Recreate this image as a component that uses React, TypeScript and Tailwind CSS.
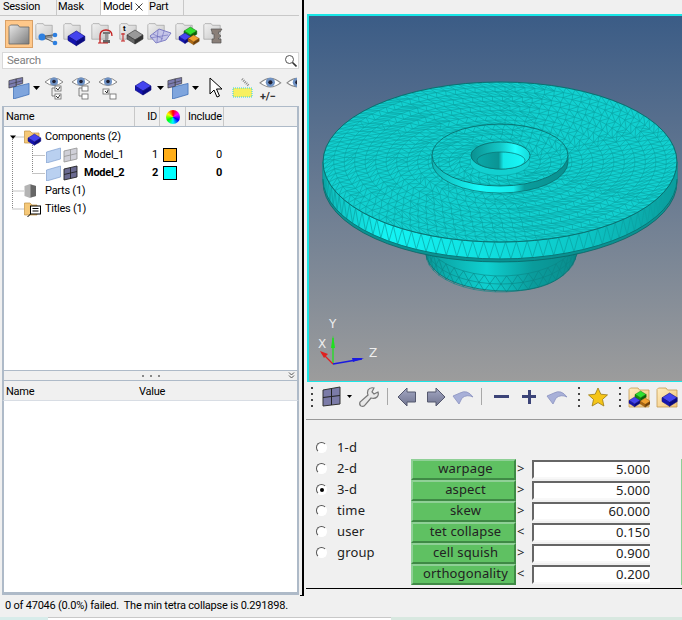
import React from "react";

const F = 'Roboto, "Liberation Sans", Arial, sans-serif';

function Folder({ x = 0, y = 0, tone = "gray", s = 1 }: { x?: number; y?: number; tone?: string; s?: number }) {
  const c = tone === "gray" ? ["#f2f2f2", "#c6c6c6", "#9a9a9a"] : tone === "dark" ? ["#e8e8e8", "#7c7c7c", "#666"] : ["#ffedc0", "#f2c478", "#c49a50"];
  const id = "f" + tone;
  return (
    <g transform={`translate(${x} ${y}) scale(${s})`}>
      <defs>
        <linearGradient id={id} x1="0" y1="0" x2="1" y2="1">
          <stop offset="0" stopColor={c[0]} />
          <stop offset="1" stopColor={c[1]} />
        </linearGradient>
      </defs>
      <path d="M1 3.5 L2.5 2 H10 L11.5 4 H21 V21 H1 Z" fill={`url(#${id})`} stroke={c[2]} strokeWidth="0.8" />
    </g>
  );
}

function Box3D({ x, y, s = 1, top = "#4a5cff", side = "#1414b0", dark = "#0a0a80" }: { x: number; y: number; s?: number; top?: string; side?: string; dark?: string }) {
  return (
    <g transform={`translate(${x} ${y}) scale(${s})`}>
      <path d="M0 5 L8 0 L16 5 L8 10 Z" fill={top} stroke={dark} strokeWidth="0.6" />
      <path d="M0 5 V9 L8 14 V10 Z" fill={side} stroke={dark} strokeWidth="0.6" />
      <path d="M16 5 V9 L8 14 V10 Z" fill={dark} stroke={dark} strokeWidth="0.6" />
    </g>
  );
}

function Icon({ children, w = 26, h = 26 }: { children?: React.ReactNode; w?: number; h?: number }) {
  return (
    <svg width={w} height={h} viewBox={`0 0 ${w} ${h}`} className="block shrink-0">
      {children}
    </svg>
  );
}

function TopIcons() {
  return (
    <div className="flex h-[36px] items-center pl-[3px]">
      <div className="flex h-[28px] w-[28px] items-center justify-center border border-[#d9a066] bg-[#ffc88a]">
        <Icon w={22} h={22}>
          <Folder x={0} y={0} tone="dark" />
        </Icon>
      </div>
      {[
        <g key="a"><circle cx="9" cy="16" r="3.5" fill="#2d7fe0" /><circle cx="22" cy="14" r="2.3" fill="#2d7fe0" /><circle cx="22" cy="22" r="2.3" fill="#2d7fe0" /><path d="M12 16 H19 M12 15 L20 14 M12 17 L20 21" stroke="#333" strokeWidth="0.8" /></g>,
        <Box3D key="b" x={7} y={10} s={1.05} top="#4444ee" />,
        <g key="c"><path d="M11 22 V15 Q11 9 17 9 Q23 9 23 15" fill="none" stroke="#c42020" strokeWidth="1.3" /><rect x="14" y="11" width="7" height="2" fill="#777" /><rect x="16" y="13" width="3" height="6" fill="#999" /><rect x="14" y="19" width="7" height="3" fill="#666" /><path d="M9 22 H19" stroke="#c42020" /></g>,
        <g key="d"><text x="6" y="10" fontSize="8" fontWeight="bold" fill="#000" fontFamily={F}>t</text><path d="M6 12 V20" stroke="#c42020" strokeWidth="1" /><path d="M4 13 H8 M4 20 H8" stroke="#c42020" /><Box3D x={10} y={9} top="#999" side="#666" dark="#333" /></g>,
        <g key="e"><path d="M5 15 L14 8 L26 12 L21 19 L11 22 Z" fill="#c5c5e8" stroke="#6a6abb" strokeWidth="0.8" /><path d="M8 13 L18 18 M13 9 L12 21 M19 10 L16 20 M5 17 L23 14" stroke="#6a6abb" strokeWidth="0.6" /></g>,
        <g key="f"><Box3D x={11} y={6} s={0.8} top="#30e030" side="#109010" dark="#0a600a" /><Box3D x={6} y={12} s={0.75} top="#4444ee" /><Box3D x={15} y={14} s={0.7} top="#f0a030" side="#b06a10" dark="#704008" /></g>,
        <g key="g"><path d="M10 8 H21 L19 11 H17.5 V13 L20 15 L17.5 17 V18 H20 V22 H11 V18 H13 V13 H11 V11 Z" fill="#8a7f78" stroke="#555" strokeWidth="0.7" /></g>,
      ].map((c, i) => (
        <div key={i} className="flex h-[28px] w-[28px] items-center justify-center">
          <Icon w={28} h={26}>
            <Folder x={2} y={1} s={0.82} />
            {c}
          </Icon>
        </div>
      ))}
    </div>
  );
}

function Eye({ x = 0, y = 0, s = 1 }: { x?: number; y?: number; s?: number }) {
  return (
    <g transform={`translate(${x} ${y}) scale(${s})`}>
      <path d="M0 6 Q9 -2 18 6 Q9 13 0 6 Z" fill="#fff" stroke="#888" strokeWidth="1" />
      <circle cx="9" cy="5.5" r="4" fill="#6f92c4" />
      <circle cx="9" cy="5.5" r="1.8" fill="#223" />
    </g>
  );
}

function Caret() {
  return (
    <svg width="7" height="4" viewBox="0 0 7 4" className="block shrink-0">
      <path d="M0 0 H7 L3.5 4 Z" fill="#000" />
    </svg>
  );
}

function Flag() {
  return (
    <svg width={22} height={22} viewBox="0 0 24 24" className="block shrink-0">
      <path d="M6 11 L23 7 V19 L6 24 Z" fill="#7fa5dd" stroke="#2b5fae" strokeWidth="0.7" />
      <path d="M1 4 L9 2 V10 L1 12 Z" fill="#7c7cb0" stroke="#333" strokeWidth="0.7" />
      <path d="M9 2 L16 0.5 V7 L9 9 Z" fill="#7c7cb0" stroke="#333" strokeWidth="0.7" />
      <path d="M1 8 L16 4" stroke="#333" strokeWidth="0.6" />
    </svg>
  );
}

function SmallTreeBoxes({ v }: { v: number }) {
  return (
    <g stroke="#666" fill="#fff" strokeWidth="0.8">
      {v === 2 ? (
        <>
          <rect x="9" y="14" width="6" height="5" />
          <rect x="16" y="19" width="6" height="5" />
          <path d="M11 16 L13 18 L14 15" fill="none" stroke="#000" />
        </>
      ) : (
        <>
          <rect x="15" y="11" width="6" height="5" />
          <rect x="15" y="19" width="6" height="5" />
          <path d="M12 13 V21 M12 13 H15 M12 21 H15" fill="none" />
          {v === 0 && <path d="M16 13 L18 15 L20 12 M16 21 L18 23 L20 20" fill="none" stroke="#000" />}
        </>
      )}
    </g>
  );
}

function SecondToolbar() {
  return (
    <div className="flex h-[37px] items-center overflow-hidden pl-[6px]">
      <Flag />
      <div className="ml-[3px]"><Caret /></div>
      <Icon w={27} h={26}><Eye x={5} y={1} /><SmallTreeBoxes v={0} /></Icon>
      <Icon w={27} h={26}><Eye x={5} y={1} /><SmallTreeBoxes v={1} /></Icon>
      <Icon w={27} h={26}><Eye x={5} y={1} /><SmallTreeBoxes v={2} /></Icon>
      <div className="ml-[14px]">
        <Icon w={20} h={20}><Box3D x={0} y={3} top="#4444ee" /></Icon>
      </div>
      <div className="ml-[2px]"><Caret /></div>
      <div className="ml-[3px]"><Flag /></div>
      <div className="ml-[3px]"><Caret /></div>
      <div className="ml-[10px]">
        <svg width="14" height="22" viewBox="0 0 14 22" className="block"><path d="M1 1 V17 L5 13 L8 20 L10.5 19 L7.5 12 L13 12 Z" fill="#fff" stroke="#000" strokeWidth="1" /></svg>
      </div>
      <div className="ml-[9px]">
        <svg width="22" height="22" viewBox="0 0 22 22" className="block"><rect x="1" y="11" width="19" height="9" fill="#f8f060" stroke="#30d0e0" strokeDasharray="1 1" /><path d="M10 2 L17 9" stroke="#888" strokeWidth="2.5" strokeDasharray="1 1" /></svg>
      </div>
      <div className="ml-[4px]">
        <Icon w={24} h={28}><Eye x={2} y={2} s={1.15} /><text x="2" y="26" fontSize="11" fontWeight="bold" fill="#333" fontFamily={F}>+/−</text></Icon>
      </div>
      <div className="ml-[1px]">
        <Icon w={14} h={28}><Eye x={4} y={2} s={1.15} /></Icon>
      </div>
    </div>
  );
}

function FlagMesh({ dark }: { dark: boolean }) {
  return (
    <svg width="34" height="16" viewBox="0 0 34 16" className="block shrink-0">
      <path d="M0.5 5 L14.5 1 V12 L0.5 16 Z" fill="#b9d0f0" stroke="#7f9fd0" strokeWidth="0.7" />
      <path d="M18 4 L31 1 V12 L18 15 Z" fill={dark ? "#6a6a90" : "#d0d0d8"} stroke={dark ? "#222" : "#999"} strokeWidth="0.9" />
      <path d="M18 9.5 L31 6.5 M24.5 2.5 V13.5" stroke={dark ? "#222" : "#999"} strokeWidth="0.9" />
    </svg>
  );
}

function TreeRow({ pad, icon, text, bold, id, color, include, gap = 3 }: { pad: string; icon: React.ReactNode; text: string; bold?: boolean; id?: string; color?: string; include?: string; gap?: number }) {
  return (
    <div className={`relative flex h-[18px] items-center ${pad} ${bold ? "font-bold" : ""}`}>
      {icon}
      <span className="pt-[1px]" style={{ marginLeft: gap }}>{text}</span>
      {id && <span className="absolute left-[145px] w-[9px] pt-[1px] text-right">{id}</span>}
      {color && <span className="absolute left-[159px] top-[2px] h-[14px] w-[14px] border border-black" style={{ background: color }} />}
      {include && <span className="absolute left-[212px] pt-[1px]">{include}</span>}
    </div>
  );
}

function Tree() {
  return (
    <div className="relative min-h-0 flex-1 border-x-2 border-[#aebac8] bg-white text-[11px] text-[#000]">
      <svg width="60" height="90" viewBox="0 0 60 90" className="absolute left-0 top-0">
        <g stroke="#888" strokeDasharray="1 1" fill="none">
          <path d="M8.5 10 V82 M8.5 10 H20 M8.5 64 H20 M8.5 82 H20 M28.5 18 V46 M28.5 28.5 H41 M28.5 46.5 H41" />
        </g>
        <path d="M6 8.5 H12 L9 12 Z" fill="#000" />
      </svg>
      <div className="relative pt-[1px]">
        <TreeRow
          pad="pl-[20px]"
          icon={
            <Icon w={18} h={18}>
              <path d="M0.5 3 H6 L8 5 H15 V15 H0.5 Z" fill="#f5c878" stroke="#c09040" strokeWidth="0.7" />
              <Box3D x={4} y={6} s={0.8} top="#4444ee" />
            </Icon>
          }
          text="Components (2)"
        />
        <TreeRow pad="pl-[42px]" icon={<FlagMesh dark={false} />} gap={4} text="Model_1" id="1" color="#ffae19" include="0" />
        <TreeRow pad="pl-[42px]" icon={<FlagMesh dark />} gap={4} text="Model_2" bold id="2" color="#00ffff" include="0" />
        <TreeRow
          pad="pl-[20px]"
          icon={
            <Icon w={18} h={18}>
              <path d="M0.5 4 L6 2 L12 4 V14 L6 16 L0.5 14 Z" fill="#b4b4b4" />
              <path d="M6.5 2.5 L12 4 V14 L6.5 15.5 Z" fill="#666" />
            </Icon>
          }
          text="Parts (1)"
        />
        <TreeRow
          pad="pl-[20px]"
          icon={
            <Icon w={18} h={18}>
              <path d="M0.5 3 H6 L8 5 H13 V15 H0.5 Z" fill="#f5c878" stroke="#c09040" strokeWidth="0.7" />
              <rect x="6.5" y="6" width="10" height="8" fill="#fff" stroke="#000" />
              <path d="M8.5 8.5 H14.5 M8.5 11 H14.5 M6.5 14 L3.5 17" stroke="#000" />
            </Icon>
          }
          text="Titles (1)"
        />
      </div>
    </div>
  );
}

function LeftPanel() {
  return (
    <div className="flex h-[595px] w-[302px] shrink-0 flex-col pl-[2px] pr-[3px] text-[11px] tracking-[-0.25px] text-black" style={{ fontFamily: F }}>
      <div className="-ml-[2px] flex h-[16px] items-end border-b border-[#c8c8c8] pl-[3px]">
        <div className="flex h-[15px] w-[54px] items-center border-r border-[#c8c8c8]">Session</div>
        <div className="flex h-[15px] w-[44px] items-center border-r border-[#c8c8c8] pl-[1px]">Mask</div>
        <div className="flex h-[16px] w-[47px] items-center gap-[3px] bg-white pl-[2px]">
          Model
          <svg width="8" height="8" viewBox="0 0 8 8" className="shrink-0"><path d="M0.5 0.5 L7.5 7.5 M7.5 0.5 L0.5 7.5" stroke="#444" strokeWidth="1" /></svg>
        </div>
        <div className="flex h-[15px] w-[36px] items-center border-r border-[#c8c8c8] pl-[1px]">Part</div>
      </div>
      <TopIcons />
      <div className="flex h-[17px] items-center justify-between border border-[#d8d8d8] bg-white pl-[4px] pr-[1px] text-[11.5px] text-[#808080]">
        <span>Search</span>
        <svg width="13" height="13" viewBox="0 0 13 13"><circle cx="5.5" cy="5.5" r="4" fill="none" stroke="#555" strokeWidth="1" /><path d="M8.5 8.5 L12.5 12.5" stroke="#333" strokeWidth="1.6" /></svg>
      </div>
      <SecondToolbar />
      <div className="flex h-[21px] shrink-0 border-x-2 border-y border-[#aebac8] bg-[#f0f0f0]">
        <div className="flex w-[131px] items-center border-r border-[#c8c8c8] pl-[2px] pt-[1px]">Name</div>
        <div className="flex w-[25px] items-center justify-end border-r border-[#c8c8c8] pr-[2px] pt-[1px]">ID</div>
        <div className="flex w-[26px] items-center justify-center border-r border-[#c8c8c8]">
          <div className="h-[14px] w-[14px] rounded-full" style={{ background: "conic-gradient(#ff0000,#ff00ff,#0000ff,#00ffff,#00ff00,#ffff00,#ff0000)" }} />
        </div>
        <div className="flex w-[38px] items-center border-r border-[#c8c8c8] pl-[2px] pt-[1px]">Include</div>
      </div>
      <Tree />
      <div className="relative flex h-[11px] shrink-0 items-center justify-center gap-[6px] border-x-2 border-y border-[#aebac8] bg-[#f0f0f0]">
        <span className="h-[2px] w-[2px] bg-[#888]" />
        <span className="h-[2px] w-[2px] bg-[#888]" />
        <span className="h-[2px] w-[2px] bg-[#888]" />
        <svg width="7" height="7" viewBox="0 0 7 7" className="absolute right-[2px] top-[1px]"><path d="M1 0.5 L3.5 3 L6 0.5 M1 3.5 L3.5 6 L6 3.5" stroke="#555" fill="none" strokeWidth="1" /></svg>
      </div>
      <div className="flex h-[20px] shrink-0 items-center border-x-2 border-b border-[#aebac8] border-b-[#d8dde4] bg-[#f0f0f0] pl-[2px] pt-[4px]">
        <span className="w-[133px]">Name</span>
        <span>Value</span>
      </div>
      <div className="h-[194px] shrink-0 border-x-2 border-b-[3px] border-[#aebac8] bg-white" />
    </div>
  );
}

function buildMesh() {
  const cx = 500, cy = 162, rx = 177, ry = 80;
  const rings: [number, number][][] = [];
  const rs: number[] = [];
  for (let r = 0.17; r <= 1.0001; r += 0.0592) rs.push(Math.min(r, 1));
  rs.forEach((r, k) => {
    const n = Math.round((2 * Math.PI * r * 177) / 10);
    const pts: [number, number][] = [];
    for (let i = 0; i < n; i++) {
      const a = ((i + (k % 2) * 0.5) / n) * 2 * Math.PI;
      pts.push([cx + rx * r * Math.cos(a), cy + ry * r * Math.sin(a)]);
    }
    rings.push(pts);
  });
  let d = "";
  rings.forEach((pts, k) => {
    pts.forEach((p, i) => {
      const q = pts[(i + 1) % pts.length];
      d += `M${p[0].toFixed(1)} ${p[1].toFixed(1)}L${q[0].toFixed(1)} ${q[1].toFixed(1)}`;
      if (k > 0) {
        const prev = rings[k - 1];
        const t = Math.round((i / pts.length) * prev.length) % prev.length;
        const u = (t + 1) % prev.length;
        d += `M${p[0].toFixed(1)} ${p[1].toFixed(1)}L${prev[t][0].toFixed(1)} ${prev[t][1].toFixed(1)}`;
        d += `M${p[0].toFixed(1)} ${p[1].toFixed(1)}L${prev[u][0].toFixed(1)} ${prev[u][1].toFixed(1)}`;
      }
    });
  });
  return d;
}

function bandMesh(cx: number, cy: number, rx: number, ry: number, h: number, rows: number, step: number) {
  const a0 = 0, a1 = Math.PI;
  let d = "";
  for (let k = 0; k <= rows; k++) {
    const y0 = (k / rows) * h;
    const n = Math.round(((a1 - a0) * rx) / step);
    for (let i = 0; i <= n; i++) {
      const off = (k % 2) * 0.5;
      const a = a0 + ((i + off) / n) * (a1 - a0);
      const x = cx + rx * Math.cos(a), y = cy + ry * Math.sin(a) + y0;
      const b = a0 + ((i + 1 + off) / n) * (a1 - a0);
      if (b <= a1) d += `M${x.toFixed(1)} ${y.toFixed(1)}L${(cx + rx * Math.cos(b)).toFixed(1)} ${(cy + ry * Math.sin(b) + y0).toFixed(1)}`;
      if (k < rows) {
        const y1 = ((k + 1) / rows) * h;
        const o2 = ((k + 1) % 2) * 0.5;
        for (const j of [i, i + (off ? 1 : -1)]) {
          const c = a0 + ((j + o2) / n) * (a1 - a0);
          if (c >= a0 && c <= a1) d += `M${x.toFixed(1)} ${y.toFixed(1)}L${(cx + rx * Math.cos(c)).toFixed(1)} ${(cy + ry * Math.sin(c) + y1).toFixed(1)}`;
        }
      }
    }
  }
  return d;
}

function Model() {
  const top = React.useMemo(buildMesh, []);
  const band = React.useMemo(() => bandMesh(500, 162, 177, 80, 17, 1, 11), []);
  const boss = React.useMemo(() => bandMesh(501, 238, 75, 38, 16, 2, 11), []);
  return (
    <svg width="373" height="365" viewBox="309 16 373 365" className="block">
      <defs>
        <linearGradient id="band" x1="0" y1="0" x2="1" y2="0">
          <stop offset="0" stopColor="#0fb8b8" />
          <stop offset="0.18" stopColor="#14f4f4" />
          <stop offset="0.45" stopColor="#10e0e0" />
          <stop offset="0.75" stopColor="#0cc4c4" />
          <stop offset="1" stopColor="#0a9c9c" />
        </linearGradient>
        <linearGradient id="boss" x1="0" y1="0" x2="1" y2="0">
          <stop offset="0" stopColor="#0a9a9a" />
          <stop offset="0.4" stopColor="#0fd0d0" />
          <stop offset="0.7" stopColor="#0a9c9c" />
          <stop offset="1" stopColor="#0a8c8c" />
        </linearGradient>
        <linearGradient id="ring" x1="0" y1="0" x2="1" y2="0">
          <stop offset="0" stopColor="#0fb4b4" />
          <stop offset="0.35" stopColor="#16fafa" />
          <stop offset="0.6" stopColor="#16eaea" />
          <stop offset="0.68" stopColor="#0a9c9c" />
          <stop offset="1" stopColor="#0a9090" />
        </linearGradient>
        <linearGradient id="hole" x1="0" y1="0" x2="1" y2="0">
          <stop offset="0" stopColor="#0a9090" />
          <stop offset="0.5" stopColor="#14c8c8" />
          <stop offset="0.75" stopColor="#20ffff" />
          <stop offset="1" stopColor="#14d8d8" />
        </linearGradient>
        <linearGradient id="hole2" x1="0" y1="0" x2="1" y2="0">
          <stop offset="0" stopColor="#0aa8a8" />
          <stop offset="0.45" stopColor="#0a9494" />
          <stop offset="0.55" stopColor="#14e8e8" />
          <stop offset="1" stopColor="#18f8f8" />
        </linearGradient>
        <clipPath id="ringclip"><ellipse cx="500" cy="155" rx="68" ry="31" /></clipPath>
      </defs>
      <path d="M426 255 C432 280 470 291 507 291 C545 291 572 278 578 250 L578 240 H426 Z" fill="url(#boss)" />
      <path d={boss} stroke="#0a8484" strokeWidth="0.6" fill="none" />
      <path d="M426 255 C432 280 470 291 507 291 C545 291 572 278 578 250" fill="none" stroke="#0a7070" strokeWidth="0.8" />
      <path d="M323 162 V182 A177 80 0 0 0 677 182 V162 Z" fill="#0a9292" stroke="#0a6464" strokeWidth="0.8" />
      <path d="M323 162 V179 A177 80 0 0 0 677 179 V162 Z" fill="url(#band)" />
      <path d={band} stroke="#0aa0a0" strokeWidth="0.7" fill="none" />
      <path d="M323 179 A177 80 0 0 0 677 179" fill="none" stroke="#0a6a6a" strokeWidth="0.8" />
      <ellipse cx="500" cy="162" rx="177" ry="80" fill="#12d0d0" />
      <path d={top} stroke="#0ba2a2" strokeWidth="0.65" fill="none" />
      <ellipse cx="500" cy="162" rx="177" ry="80" fill="none" stroke="#0a6060" strokeWidth="0.8" />
      <path d="M432 155 V162 A68 31 0 0 0 568 162 V155 Z" fill="url(#ring)" stroke="#0a6a6a" strokeWidth="0.7" />
      <ellipse cx="500" cy="155" rx="68" ry="31" fill="#12d0d0" />
      <g clipPath="url(#ringclip)">
        <path d={top} stroke="#0ba2a2" strokeWidth="0.65" fill="none" />
      </g>
      <ellipse cx="500" cy="155" rx="68" ry="31" fill="none" stroke="#0a6464" strokeWidth="0.8" />
      <ellipse cx="500.5" cy="155.5" rx="29.5" ry="13.5" fill="url(#hole)" stroke="#0a6a6a" strokeWidth="0.8" />
      <ellipse cx="501" cy="160.5" rx="24" ry="8.5" fill="url(#hole2)" stroke="#0a7070" strokeWidth="0.7" />
    </svg>
  );
}

function Triad() {
  return (
    <svg width="72" height="60" viewBox="0 0 72 60" className="absolute bottom-[5px] left-[-2px]">
      <path d="M26 48 V22" stroke="#20e020" strokeWidth="1.3" />
      <path d="M24 32 L26 19 L28 32 Z" fill="#20e020" />
      <path d="M26 48 L15 37" stroke="#e02020" strokeWidth="1.3" />
      <path d="M13 35 L21 38 L17 42 Z" fill="#e02020" />
      <path d="M26 48 L55 43" stroke="#1a1ae0" strokeWidth="1.3" />
      <path d="M45 42 L57 42 L46 46 Z" fill="#1a1ae0" />
      <text x="22" y="12" fill="#eee" fontSize="12" fontFamily="DejaVu Sans">Y</text>
      <text x="11" y="32" fill="#eee" fontSize="12" fontFamily="DejaVu Sans">X</text>
      <text x="62" y="41" fill="#eee" fontSize="12" fontFamily="DejaVu Sans">Z</text>
    </svg>
  );
}

function Dots() {
  return (
    <div className="flex h-[20px] w-[3px] shrink-0 flex-col justify-between">
      <span className="h-[2px] w-[2px] bg-[#444]" />
      <span className="h-[2px] w-[2px] bg-[#444]" />
      <span className="h-[2px] w-[2px] bg-[#444]" />
      <span className="h-[2px] w-[2px] bg-[#444]" />
    </div>
  );
}

const Sep = () => <div className="h-[17px] w-[1px] shrink-0 bg-[#a8a8a8]" />;

function Arrow({ flip }: { flip?: boolean }) {
  return (
    <svg width="20" height="22" viewBox="0 0 20 22" className="block shrink-0" style={flip ? { transform: "scaleX(-1)" } : undefined}>
      <defs>
        <linearGradient id="arr" x1="0" y1="0" x2="0" y2="1">
          <stop offset="0" stopColor="#a4a8c4" />
          <stop offset="1" stopColor="#70748f" />
        </linearGradient>
      </defs>
      <path d="M1 11 L10 2 V6 H18.5 V16 H10 V20 Z" fill="url(#arr)" stroke="#55586e" strokeWidth="1" />
    </svg>
  );
}

function Curl() {
  return (
    <svg width="22" height="18" viewBox="0 0 22 18" className="block shrink-0">
      <path d="M1 8 L8 5 Q15 1 21 9 Q15 6 10 10 L7 16 Z" fill="#a8b0d8" stroke="#8a92c0" strokeWidth="0.8" />
    </svg>
  );
}

function ViewToolbar() {
  return (
    <div className="mt-[1px] flex h-[27px] shrink-0 items-center bg-[#f0f0f0] pl-[5px]">
      <Dots />
      <div className="ml-[8px]">
        <svg width="20" height="21" viewBox="0 0 20 21" className="block">
          <path d="M1 4 L18 1 V18 L1 20 Z" fill="#7b7ba8" stroke="#333" strokeWidth="1" />
          <path d="M1 11.5 L18 9.5 M9.5 2.5 V19" stroke="#222" strokeWidth="1" />
        </svg>
      </div>
      <div className="ml-[5px]">
        <svg width="5" height="3" viewBox="0 0 5 3" className="block"><path d="M0 0 H5 L2.5 3 Z" fill="#000" /></svg>
      </div>
      <div className="ml-[6px]">
        <svg width="22" height="22" viewBox="0 0 22 22" className="block">
          <path d="M20 6 L16 8 L14 6 L16 2 Q12 1 10 4 Q9 7 10 9 L2 16 Q1 19 3 20 Q6 21 7 19 L13 12 Q17 13 19 11 Q21 9 20 6 Z" fill="#e8e8e8" stroke="#777" strokeWidth="1.2" />
        </svg>
      </div>
      <div className="ml-[7px]"><Sep /></div>
      <div className="ml-[9px]"><Arrow /></div>
      <div className="ml-[9px]"><Arrow flip /></div>
      <div className="ml-[6px]"><Curl /></div>
      <div className="ml-[7px]"><Sep /></div>
      <div className="ml-[12px] h-[3px] w-[15px] bg-[#3c4478]" />
      <div className="relative ml-[13px] h-[14px] w-[14px]">
        <div className="absolute left-0 top-[5.5px] h-[3px] w-[14px] bg-[#3c4478]" />
        <div className="absolute left-[5.5px] top-0 h-[14px] w-[3px] bg-[#3c4478]" />
      </div>
      <div className="ml-[10px]"><Curl /></div>
      <div className="ml-[10px]"><Dots /></div>
      <div className="ml-[7px]">
        <svg width="20" height="20" viewBox="0 0 20 20" className="block"><path d="M10 1 L12.8 7.2 L19.5 7.9 L14.5 12.4 L15.9 19 L10 15.6 L4.1 19 L5.5 12.4 L0.5 7.9 L7.2 7.2 Z" fill="#f5c518" stroke="#9a7a10" strokeWidth="0.8" /></svg>
      </div>
      <div className="ml-[11px]"><Dots /></div>
      <div className="ml-[6px]">
        <Icon w={22} h={22}>
          <Folder x={0} y={0} tone="y" />
          <Box3D x={7} y={5} s={0.7} top="#30e030" side="#109010" dark="#0a600a" />
          <Box3D x={1} y={11} s={0.7} top="#4444ee" />
          <Box3D x={12} y={12} s={0.65} top="#f0a030" side="#b06a10" dark="#704008" />
        </Icon>
      </div>
      <div className="ml-[6px]">
        <Icon w={22} h={22}>
          <Folder x={0} y={0} tone="y" />
          <Box3D x={6} y={7} s={0.95} top="#4444ee" />
        </Icon>
      </div>
    </div>
  );
}

const rows: [string, string, string][] = [
  ["warpage", ">", "5.000"],
  ["aspect", ">", "5.000"],
  ["skew", ">", "60.000"],
  ["tet collapse", "<", "0.150"],
  ["cell squish", ">", "0.900"],
  ["orthogonality", "<", "0.200"],
];

function Radio({ on, label }: { on?: boolean; label: string }) {
  return (
    <div className="flex h-[21px] items-center">
      <span className="relative mr-[10px] h-[11px] w-[11px] rounded-full border border-b-white border-l-[#555] border-r-white border-t-[#555] bg-white">
        {on && <span className="absolute left-[3px] top-[3px] h-[4px] w-[4px] rounded-full bg-black" />}
      </span>
      <span>{label}</span>
    </div>
  );
}

function Form() {
  return (
    <div className="flex h-[169px] shrink-0 border-b border-black bg-[#f0f0f0] pl-[10px] pt-[17px] text-[13px] tracking-[0.15px] text-[#222]" style={{ fontFamily: '"Noto Sans", sans-serif' }}>
      <div className="flex w-[95px] shrink-0 flex-col">
        <Radio label="1-d" />
        <Radio label="2-d" />
        <Radio on label="3-d" />
        <Radio label="time" />
        <Radio label="user" />
        <Radio label="group" />
      </div>
      <div className="flex flex-col pt-[22px]">
        {rows.map(([n, op, v]) => (
          <div key={n} className="flex h-[21px] items-stretch">
            <div className="flex w-[105px] items-center justify-center border-2 border-b-[#3f8a45] border-l-[#8fd096] border-r-[#3f8a45] border-t-[#8fd096] bg-[#5fc162] pb-[2px] pl-[4px] leading-none">{n}</div>
            <div className="w-[16px] pl-[1px] leading-[19px]">{op}</div>
            <div className="my-[1px] flex w-[118px] items-center justify-end border-y-2 border-l-2 border-b-[#f8f8f8] border-l-[#666] border-t-[#666] bg-white leading-none">{v}</div>
          </div>
        ))}
      </div>
      <div className="ml-auto mt-[22px] h-[126px] w-[1px] bg-[#8fd096]" />
    </div>
  );
}

function RightPanel() {
  return (
    <div className="flex min-w-0 flex-1 flex-col pt-[14px]">
      <div className="relative ml-[1px] h-[368px] shrink-0 overflow-hidden border-b border-l-2 border-t-2 border-[#19e6e6] bg-gradient-to-b from-[#3b5c86] to-[#9c9c9c]">
        <Model />
        <Triad />
      </div>
      <ViewToolbar />
      <div className="h-[10px] shrink-0 border-b border-[#999] bg-[#f0f0f0]" />
      <Form />
    </div>
  );
}

export default function App() {
  return (
    <div className="flex h-[620px] w-[682px] flex-col overflow-hidden bg-[#f0f0f0]">
      <div className="flex h-[595px] shrink-0">
        <LeftPanel />
        <div className="relative h-[596px] w-[2px] shrink-0 bg-black">
          <span className="absolute bottom-0 left-[-2px] h-[1px] w-[2px] bg-black" />
        </div>
        <div className="w-[2px] shrink-0" />
        <RightPanel />
      </div>
      <div className="flex h-[22px] shrink-0 items-center pl-[5px] text-[11px] tracking-[-0.21px] text-black" style={{ fontFamily: F }}>
        0 of 47046 (0.0%) failed.&nbsp; The min tetra collapse is 0.291898.
      </div>
      <div className="flex h-[3px] shrink-0">
        <div className="w-[48px] bg-[#d8ecea]" />
        <div className="w-[343px] border-t border-[#c8c8c8] bg-white" />
        <div className="flex-1 bg-[#d8e8e0]" />
      </div>
    </div>
  );
}
